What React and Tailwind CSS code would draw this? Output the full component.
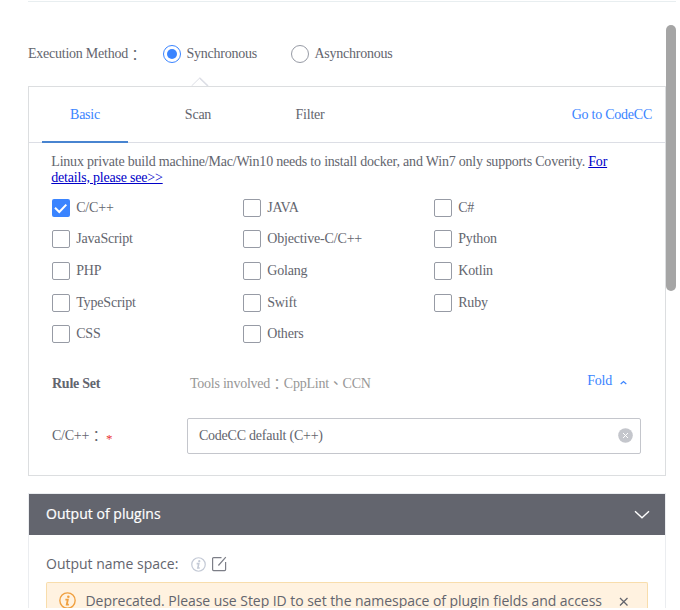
import React from "react";

const SERIF = "font-['Liberation_Serif','Noto_Sans_CJK_TC',serif]";
const SANS = "font-['Open_Sans','Noto_Sans',sans-serif]";

const LANGUAGES = [
  ["C/C++", "JAVA", "C#"],
  ["JavaScript", "Objective-C/C++", "Python"],
  ["PHP", "Golang", "Kotlin"],
  ["TypeScript", "Swift", "Ruby"],
  ["CSS", "Others"],
];

function Radio({ checked, label }) {
  return (
    <label className="flex items-center">
      <span
        className={
          "flex h-[18px] w-[18px] items-center justify-center rounded-full border " +
          (checked ? "border-[#3a84ff]" : "border-[#979ba5]")
        }
      >
        {checked && <span className="h-[10px] w-[10px] rounded-full bg-[#3a84ff]" />}
      </span>
      <span className="ml-[5.5px] whitespace-nowrap">{label}</span>
    </label>
  );
}

function Checkbox({ checked, label }) {
  return (
    <label className="flex h-[18px] w-[191px] items-center">
      {checked ? (
        <span className="flex h-[18px] w-[18px] items-center justify-center rounded-[2px] bg-[#3a84ff]">
          <svg width="18" height="18" viewBox="0 0 18 18" fill="none" stroke="#fff" strokeWidth="2">
            <path d="M3 8.7 7.3 13 14.3 5.6" />
          </svg>
        </span>
      ) : (
        <span className="h-[18px] w-[18px] rounded-[2px] border border-[#979ba5]" />
      )}
      <span className="ml-[6.2px] leading-[18px] tracking-[-0.17px]">{label}</span>
    </label>
  );
}

function InfoIcon({ size, color }) {
  return (
    <svg width={size} height={size} viewBox="0 0 16 16" fill="none" stroke={color}>
      <circle cx="8" cy="8" r="7.2" strokeWidth="1.3" />
      <circle cx="8.8" cy="4.5" r="1.2" fill={color} stroke="none" />
      <path d="M6 7.1h2.3L7.3 11.8h2" strokeWidth="1.7" />
    </svg>
  );
}

export default function App() {
  return (
    <div className="h-[610px] w-[680px] overflow-hidden bg-white">
      <div className={"relative h-[608px] w-[676px] overflow-hidden pl-7 text-sm tracking-[-0.24px] text-[#63656e] " + SERIF}>
        <div className="mt-px h-px bg-[#e8eef0]" />
        <div className="mt-[42px] flex h-5 items-center">
          <span className="flex w-[135px] whitespace-nowrap">
            Execution Method<span className="mt-[2px] -mb-[2px]">：</span>
          </span>
          <Radio checked label="Synchronous" />
          <span className="ml-auto w-[385px]">
            <Radio label="Asynchronous" />
          </span>
        </div>
        <svg className="mt-[13px] ml-[163px] block" width="18" height="9" viewBox="0 0 18 9" fill="none" stroke="#dcdee5">
          <path d="M.5 9 8.7 1 17 9" />
          <path d="M8.7 1 17 9" strokeWidth="1.6" />
        </svg>

        <section className="h-[390px] w-[638px] border border-[#dcdee0]">
          <div className="flex h-14 items-stretch border-b border-[#dcdee5] px-[13px]">
            <div className="-mb-px flex w-[86px] items-center justify-center border-b-2 border-[#4884d0] pt-[2px] text-[#3a84ff]">
              Basic
            </div>
            <div className="ml-[27px] flex w-[86px] items-center justify-center">Scan</div>
            <div className="ml-[26px] flex w-[86px] items-center justify-center">Filter</div>
            <div className="ml-auto flex items-center text-[#3a84ff]">Go to CodeCC</div>
          </div>

          <p className="mt-[11px] ml-[22.3px] w-[580px] leading-4 tracking-[-0.205px]">
            Linux private build machine/Mac/Win10 needs to install docker, and Win7 only supports Coverity.{" "}
            <a className="text-[#0000c8] underline">
              For
              <br />
              details, please see&gt;&gt;
            </a>
          </p>

          <div className="mt-[12.8px] ml-[23px] flex h-[144.4px] flex-col justify-between">
            {LANGUAGES.map((row) => (
              <div className="flex" key={row[0]}>
                {row.map((name) => (
                  <Checkbox key={name} label={name} checked={name === "C/C++"} />
                ))}
              </div>
            ))}
          </div>

          <div className="mt-[30.8px] ml-[23px] flex h-5 items-center">
            <b className="w-[138px]">Rule Set</b>
            <span className="flex h-5 leading-5 text-[#979797]">
              Tools involved<span className="mt-px">：</span>CppLint、CCN
            </span>
            <span className="mr-[38px] mb-[6px] ml-auto flex items-center text-[#3a84ff]">
              Fold
              <svg className="mt-[3px] ml-2" width="7" height="5" viewBox="0 0 7 5" fill="none" stroke="#3a84ff" strokeWidth="1.2">
                <path d="M.7 4 3.5 1.5 6.3 4" />
              </svg>
            </span>
          </div>

          <div className="mt-[24px] ml-[23px] flex h-9 items-center">
            <span className="flex w-[135px] items-center">
              C/C++<span className="mt-[2px]">：</span>
              <span className="mt-[5px] ml-[3px] text-[13px] leading-none text-[#ea3636]">*</span>
            </span>
            <div className="flex h-9 w-[454px] items-center rounded-[2px] border border-[#c4c6cc] pr-[7px] pl-[11px]">
              CodeCC default (C++)
              <svg className="ml-auto" width="15" height="15" viewBox="0 0 15 15" stroke="#fff">
                <circle cx="7.5" cy="7.5" r="7.3" fill="#c4c6cc" stroke="none" />
                <path d="m5 5 5 5m0-5-5 5" />
              </svg>
            </div>
          </div>
        </section>

        <section className={"mt-[17px] w-[638px] border border-b-0 border-[#ebedf0] tracking-normal " + SANS}>
          <header className="flex h-[41px] items-center bg-[#63656e] pr-[15px] pl-[17px] text-white">
            <span className="pb-px tracking-[0.03px] [-webkit-text-stroke:0.2px_white]">Output of plugins</span>
            <svg className="ml-auto" width="16" height="9" viewBox="0 0 16 9" fill="none" stroke="#fff" strokeWidth="1.4">
              <path d="M1 1.2 8 7.7 15 1.2" />
            </svg>
          </header>
          <div className="h-[73px] pt-[19px] pl-[17px]">
            <div className="flex h-5 items-center">
              <span className="w-[145px] whitespace-nowrap">Output name space:</span>
              <InfoIcon size={15} color="#c4cad6" />
              <svg className="ml-[5px]" width="16" height="16" viewBox="0 0 16 16" fill="none" stroke="#7c7e87" strokeWidth="1.2">
                <path d="M10.5 1.6H2.6a1 1 0 0 0-1 1v11a1 1 0 0 0 1 1h11a1 1 0 0 0 1-1V6M7.4 9.5 14.8 1.2" />
              </svg>
            </div>
            <div className="mt-2 flex h-[26px] w-[602px] items-start rounded-t-[2px] border border-b-0 border-[#f8ddac] bg-[#fff2e0] pt-[9px] pl-[12px]">
              <InfoIcon size={17} color="#f0a040" />
              <span className="-mt-px ml-[9.5px] w-[533.5px] leading-5 tracking-[-0.05px] whitespace-nowrap">
                Deprecated. Please use Step ID to set the namespace of plugin fields and access
              </span>
              <svg className="mt-[5px]" width="10" height="10" viewBox="0 0 10 10" stroke="#63656e" strokeWidth="1.3">
                <path d="m1 1 7.5 7.5m0-7.5L1 8.5" />
              </svg>
            </div>
          </div>
        </section>

        <div className="absolute top-[25px] right-0 h-[266px] w-[10px] rounded-full bg-[#a5a5a5]" />
      </div>
    </div>
  );
}
